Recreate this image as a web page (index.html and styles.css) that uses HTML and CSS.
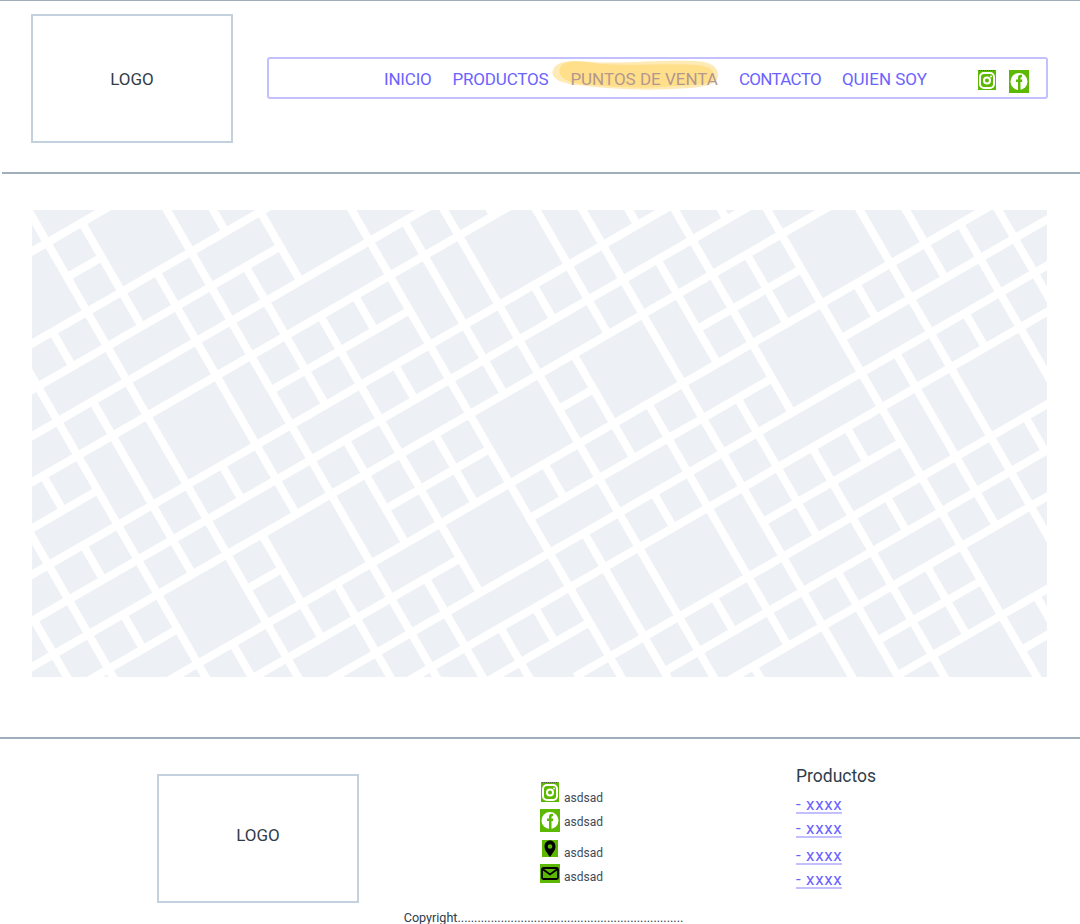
FILE: index.html
```html
<!DOCTYPE html>
<html lang="en">
<head>
    <meta charset="UTF-8">
    <meta name="viewport" content="width=device-width, initial-scale=1.0">
    <title>Puntos de venta</title>
    <link rel="stylesheet" href="styles.css">
</head>
<body>
    <header class="header">
        <div class="logo">LOGO</div>
        <nav class="nav">
            <a class="nav-link" href="#">INICIO</a>
            <a class="nav-link" href="#">PRODUCTOS</a>
            <a class="nav-link nav-link-active" href="#">
                <svg class="blob" viewBox="0 0 168 30">
                    <path class="blob-light" d="M3 8C8 1 20 0 40 2C70 4 110 0 140 1C158 1 168 6 167 16C166 26 150 28 120 29C90 31 50 28 25 25C8 23 -3 17 3 8Z"/>
                    <path class="blob-dark" d="M10 6C15 0 30 1 50 4C80 6 120 3 145 5C160 6 165 12 163 19C160 25 140 25 110 27C85 29 55 26 30 24C12 22 5 14 10 6Z"/>
                </svg>
                <span class="nav-text">PUNTOS DE VENTA</span>
            </a>
            <a class="nav-link nav-link-tight" href="#">CONTACTO</a>
            <a class="nav-link nav-link-wide" href="#">QUIEN SOY</a>
            <div class="nav-icons">
                <svg class="icon-insta" viewBox="0 0 18 20">
                    <rect width="18" height="20" fill="#5cb800"/>
                    <path d="M1 .5H17" stroke="#555" stroke-dasharray="1 1"/>
                    <rect x="2" y="3" width="14" height="15" rx="4" fill="none" stroke="#fff" stroke-width="2"/>
                    <circle cx="9" cy="10.500" r="3" fill="none" stroke="#fff" stroke-width="2"/>
                    <circle cx="13" cy="6.500" r="1" fill="#fff"/>
                </svg>
                <svg class="icon-face" viewBox="0 0 20 23">
                    <rect width="20" height="23" fill="#5cb800"/>
                    <circle cx="10" cy="11.500" r="8.500" fill="#fff"/>
                    <path d="M9 20V12H7V9.500H9V7.500C9 5.500 10.500 4.500 13 5V7.200C11.500 7 11.500 7.500 11.500 9.500H13.300L13 12H11.500V20Z" fill="#5cb800"/>
                </svg>
            </div>
        </nav>
    </header>

    <main class="main">
        <svg class="map" viewBox="32 210 1015 467">
            <rect x="32" y="210" width="1015" height="467" fill="#edf0f5"/>
            <!-- streets on a 40px grid turned 30deg: "M col row V row" and "M col row H col" -->
            <g class="streets" transform="rotate(-30) translate(-.5 -6.400) scale(40)">
                <path d="M-7 14V18M-6 11.500V18M-5 11V12M-5 13V14M-5 15V16M-4 7V19M-3 8V9M-3 10V15M-3 17V18M-2 4V20M-1 6V9M-1 13V14M-1 15V18"/>
                <path d="M0 8V15M0 17V21M1 6V22M2 7V8M2 9V13M2 14V17M2 18V23M3 8V10M3 11V19M3 20V23M4 11V12M4 13V14M4 15V17M4 20V21"/>
                <path d="M5 8V24M6 10V15M6 17V18M6 19V25M7 8V25M8 10V11M8 13V14M8 15V18M8 19V20M8 22V23M8 24V25M9 11V15M9 17V24M10 11V26"/>
                <path d="M11 12V13M11 14V17M11 18V22M11 23V27M12 12V19M12 20V27M13 13V14M13 15V17M13 20V21M13 22V23M13 24V26M14 13V28"/>
                <path d="M15 17V18M15 19V24M15 26V28M16 14V26M17 15V18M17 19V20M17 22V23M18 17V22M19 16V20"/>
                <path d="M-4 6H0M-2 7H-1M-5 8H4M-5 9H3M-7 10H8M-8 11H9M-8 12H-4M1 12H5M-9 13H13M-9 14H15M-9 15H16"/>
                <path d="M-8 16H-4M-2 16H-1M2 16H5M7 16H8M11 16H14M-6 17H20M-3 18H3M5 18H12M14 18H21M-2 19H21M0 20H20"/>
                <path d="M2 21H5M10 21H14M4 22H20M6 23H19M7 24H19M11 25H14M11 26H18M14 27H18"/>
            </g>
        </svg>
    </main>

    <footer class="footer">
        <div class="footer-top">
            <div class="logo logo-footer">LOGO</div>
            <ul class="contact">
                <li class="contact-row contact-row-short">
                    <span class="contact-icon">
                        <svg class="icon-insta" viewBox="0 0 18 20">
                            <rect width="18" height="20" fill="#5cb800"/>
                            <path d="M1 .5H17" stroke="#555" stroke-dasharray="1 1"/>
                            <rect x="2" y="3" width="14" height="15" rx="4" fill="none" stroke="#fff" stroke-width="2"/>
                            <circle cx="9" cy="10.500" r="3" fill="none" stroke="#fff" stroke-width="2"/>
                            <circle cx="13" cy="6.500" r="1" fill="#fff"/>
                        </svg>
                    </span>
                    <span>asdsad</span>
                </li>
                <li class="contact-row contact-row-face">
                    <span class="contact-icon">
                        <svg class="icon-face" viewBox="0 0 20 23">
                            <rect width="20" height="23" fill="#5cb800"/>
                            <circle cx="10" cy="11.500" r="8.500" fill="#fff"/>
                            <path d="M9 20V12H7V9.500H9V7.500C9 5.500 10.500 4.500 13 5V7.200C11.500 7 11.500 7.500 11.500 9.500H13.300L13 12H11.500V20Z" fill="#5cb800"/>
                        </svg>
                    </span>
                    <span class="contact-text-up">asdsad</span>
                </li>
                <li class="contact-row">
                    <span class="contact-icon">
                        <svg class="icon-pin" viewBox="0 0 16 17">
                            <rect width="16" height="17" fill="#5cb800"/>
                            <path fill-rule="evenodd" d="M8 17C5 12.500 2.500 10 2.500 6.500C2.500 3 5 .5 8 .5C11 .5 13.500 3 13.500 6.500C13.500 10 11 12.500 8 17ZM8 4.200A2.300 2.300 0 1 0 8 8.800A2.300 2.300 0 1 0 8 4.200Z" fill="#000"/>
                        </svg>
                    </span>
                    <span>asdsad</span>
                </li>
                <li class="contact-row">
                    <span class="contact-icon">
                        <svg class="icon-mail" viewBox="0 0 20 19">
                            <rect width="20" height="19" fill="#5cb800"/>
                            <rect x="2" y="4" width="16" height="11" rx="1.500" fill="none" stroke="#000" stroke-width="1.800"/>
                            <path d="M2.500 5L10 10.500L17.500 5" fill="none" stroke="#000" stroke-width="1.800"/>
                        </svg>
                    </span>
                    <span>asdsad</span>
                </li>
            </ul>
            <div class="products">
                <h3 class="products-title">Productos</h3>
                <a class="product-link" href="#">- xxxx</a>
                <a class="product-link" href="#">- xxxx</a>
                <a class="product-link product-link-gap" href="#">- xxxx</a>
                <a class="product-link" href="#">- xxxx</a>
            </div>
        </div>
        <p class="copyright">Copyright....................................................................</p>
    </footer>
</body>
</html>
```

FILE: styles.css
```css
body {
    font-family: Roboto, "Liberation Sans", sans-serif;
    background-color: #fff;
    color: #2f3d4a;
    margin: 0;
    padding: 0;
    height: 924px;
    overflow: hidden;
    border-top: 1px solid #a0aebb;
    box-sizing: border-box;
}
.header {
    display: flex;
    align-items: flex-start;
    height: 173px;
    margin-left: 2px;
    padding: 13px 32px 0 29px;
    box-sizing: border-box;
    border-bottom: 2px solid #a0aebb;
}
.logo {
    display: flex;
    align-items: center;
    justify-content: center;
    width: 202px;
    height: 129px;
    box-sizing: border-box;
    border: 2px solid #c3d0de;
    font-size: 17px;
    flex-shrink: 0;
}
.logo-footer {
    padding-bottom: 8px;
}
.nav {
    display: flex;
    align-items: center;
    width: 781px;
    height: 42px;
    box-sizing: border-box;
    margin: 43px 0 0 34px;
    padding: 2px 0 0 115px;
    border: 2px solid #c4bfff;
    border-radius: 3px;
}
.nav-link {
    position: relative;
    margin-right: 21px;
    color: #6c63ff;
    font-size: 17px;
    letter-spacing: -.2px;
    text-decoration: none;
}
.nav-link-tight {
    letter-spacing: -.7px;
}
.nav-link-wide {
    letter-spacing: 0;
}
.nav-text {
    position: relative;
}
.nav-link-active {
    margin-left: 1px;
    color: #b4978f;
    letter-spacing: 0;
}
.blob {
    position: absolute;
    left: -19px;
    top: -9px;
    width: 168px;
    height: 30px;
}
.blob-light {
    fill: #fdeab5;
}
.blob-dark {
    fill: #ffdf8a;
}
.nav-icons {
    display: flex;
    align-items: flex-start;
    gap: 13px;
    margin: 4px 0 0 30px;
}
.icon-insta {
    display: block;
    width: 18px;
    height: 20px;
}
.icon-face {
    display: block;
    width: 20px;
    height: 23px;
}
.icon-pin {
    display: block;
    width: 16px;
    height: 17px;
}
.icon-mail {
    display: block;
    width: 20px;
    height: 19px;
}
.main {
    padding: 36px 0 0 32px;
}
.map {
    display: block;
    width: 1015px;
    height: 467px;
}
.streets path {
    fill: none;
    stroke: #fff;
    stroke-width: .2;
}
.footer {
    margin-top: 60px;
    border-top: 2px solid #a0aebb;
}
.footer-top {
    display: flex;
    align-items: flex-start;
    padding: 35px 0 0 157px;
}
.contact {
    list-style: none;
    margin: 8px 0 0 180px;
    padding: 0;
    width: 257px;
    font-size: 12px;
    color: #3d4a5a;
}
.contact-row {
    display: flex;
    align-items: flex-end;
    height: 19px;
    margin-bottom: 5px;
    line-height: 12px;
}
.contact-row-short {
    height: 22px;
}
.contact-row-face {
    height: 23px;
    margin-bottom: 8px;
}
.contact-text-up {
    margin-bottom: 4px;
}
.contact-icon {
    display: flex;
    justify-content: center;
    align-self: flex-start;
    width: 22px;
    margin-right: 3px;
}
.products {
    display: flex;
    flex-direction: column;
    align-items: flex-start;
    margin-top: -8px;
}
.products-title {
    margin: 0 0 10px;
    font-size: 17.500px;
    font-weight: 400;
}
.product-link {
    margin-bottom: 6px;
    border-bottom: 2px solid #c4bfff;
    color: #6c63ff;
    font-size: 17px;
    line-height: 16px;
    letter-spacing: .6px;
    text-decoration: none;
}
.product-link-gap {
    margin-top: 3px;
}
.copyright {
    margin: 7px 0 0;
    padding-left: 7px;
    text-align: center;
    font-size: 12.600px;
}
```
